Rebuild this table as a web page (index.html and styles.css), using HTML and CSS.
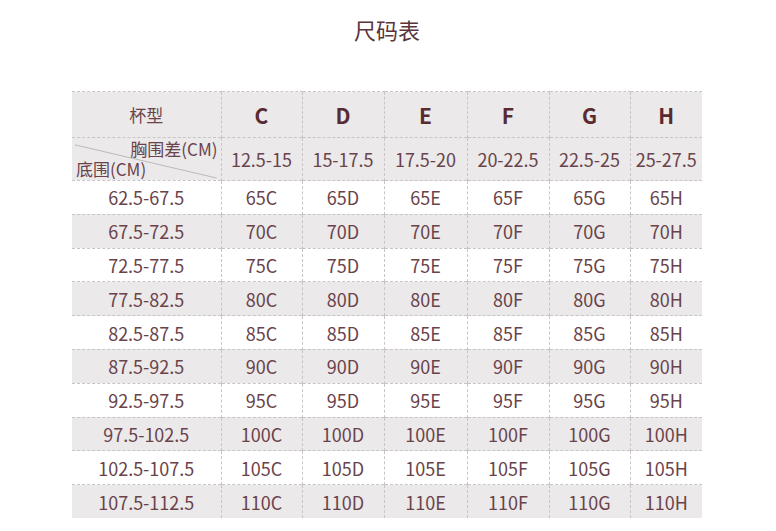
FILE: index.html
```html
<!DOCTYPE html>
<html lang="zh">
<head>
<meta charset="utf-8">
<title>尺码表</title>
<link rel="stylesheet" href="styles.css">
</head>
<body>
<div class="page">
  <h1 class="title">尺码表</h1>
  <table class="size-table">
    <colgroup>
      <col class="c0"><col class="c1"><col class="c2"><col class="c3"><col class="c4"><col class="c5"><col class="c6">
    </colgroup>
    <tr class="head gray">
      <td class="cup-label">杯型</td>
      <td class="cup">C</td><td class="cup">D</td><td class="cup">E</td><td class="cup">F</td><td class="cup">G</td><td class="cup">H</td>
    </tr>
    <tr class="sub gray">
      <td class="diag">
        <svg class="diag-line" viewBox="0 0 149 43" preserveAspectRatio="none"><line x1="3" y1="7" x2="145" y2="41" stroke="#bdb8ba" stroke-width="1"/></svg>
        <span class="diag-top">胸围差(CM)</span>
        <span class="diag-bottom">底围(CM)</span>
      </td>
      <td>12.5-15</td><td>15-17.5</td><td>17.5-20</td><td>20-22.5</td><td>22.5-25</td><td>25-27.5</td>
    </tr>
    <tr class="row"><td>62.5-67.5</td><td>65C</td><td>65D</td><td>65E</td><td>65F</td><td>65G</td><td>65H</td></tr>
    <tr class="row gray"><td>67.5-72.5</td><td>70C</td><td>70D</td><td>70E</td><td>70F</td><td>70G</td><td>70H</td></tr>
    <tr class="row"><td>72.5-77.5</td><td>75C</td><td>75D</td><td>75E</td><td>75F</td><td>75G</td><td>75H</td></tr>
    <tr class="row gray"><td>77.5-82.5</td><td>80C</td><td>80D</td><td>80E</td><td>80F</td><td>80G</td><td>80H</td></tr>
    <tr class="row"><td>82.5-87.5</td><td>85C</td><td>85D</td><td>85E</td><td>85F</td><td>85G</td><td>85H</td></tr>
    <tr class="row gray"><td>87.5-92.5</td><td>90C</td><td>90D</td><td>90E</td><td>90F</td><td>90G</td><td>90H</td></tr>
    <tr class="row"><td>92.5-97.5</td><td>95C</td><td>95D</td><td>95E</td><td>95F</td><td>95G</td><td>95H</td></tr>
    <tr class="row gray"><td>97.5-102.5</td><td>100C</td><td>100D</td><td>100E</td><td>100F</td><td>100G</td><td>100H</td></tr>
    <tr class="row"><td>102.5-107.5</td><td>105C</td><td>105D</td><td>105E</td><td>105F</td><td>105G</td><td>105H</td></tr>
    <tr class="row gray"><td>107.5-112.5</td><td>110C</td><td>110D</td><td>110E</td><td>110F</td><td>110G</td><td>110H</td></tr>
  </table>
</div>
</body>
</html>
```
FILE: styles.css
```css
* { box-sizing: border-box; }
html, body {
  margin: 0;
  padding: 0;
  background: #ffffff;
}
body {
  font-family: "Noto Sans CJK SC", "Noto Sans", sans-serif;
  color: #6a434a;
}
.page {
  width: 776px;
  height: 531px;
  overflow: hidden;
  padding: 14px 0 0 72px;
}
.title {
  margin: 0;
  width: 630px;
  text-align: center;
  font-size: 22px;
  font-weight: 400;
  line-height: 30px;
  color: #5a353b;
  margin-bottom: 47px;
}
.size-table {
  border-collapse: collapse;
  table-layout: fixed;
  width: 630px;
}
.c0 { width: 149px; }
.c1 { width: 81px; }
.c2 { width: 82px; }
.c3 { width: 83px; }
.c4 { width: 82px; }
.c5 { width: 81px; }
.c6 { width: 72px; }
.size-table td {
  padding: 0;
  text-align: center;
  vertical-align: middle;
  font-size: 18px;
  line-height: 22px;
  border-top: 1px dashed #c9c5c7;
  border-left: 1px dashed #c9c5c7;
  white-space: nowrap;
}
.size-table td:first-child { border-left: none; }
.gray td { background: #ebe9ea; }
.head td { height: 46px; }
.sub td { height: 43px; }
.row td { height: 33.8px; }
.size-table td.cup-label { font-size: 17px; }
.size-table td.cup {
  font-size: 21px;
  font-weight: 700;
  color: #5a2a31;
}
.diag {
  position: relative;
}
.diag-line {
  position: absolute;
  left: 0;
  top: 0;
  width: 100%;
  height: 100%;
}
.diag-top {
  position: absolute;
  right: 3px;
  top: 0;
  font-size: 17px;
}
.diag-bottom {
  position: absolute;
  left: 4px;
  top: 20px;
  font-size: 17px;
}
```
